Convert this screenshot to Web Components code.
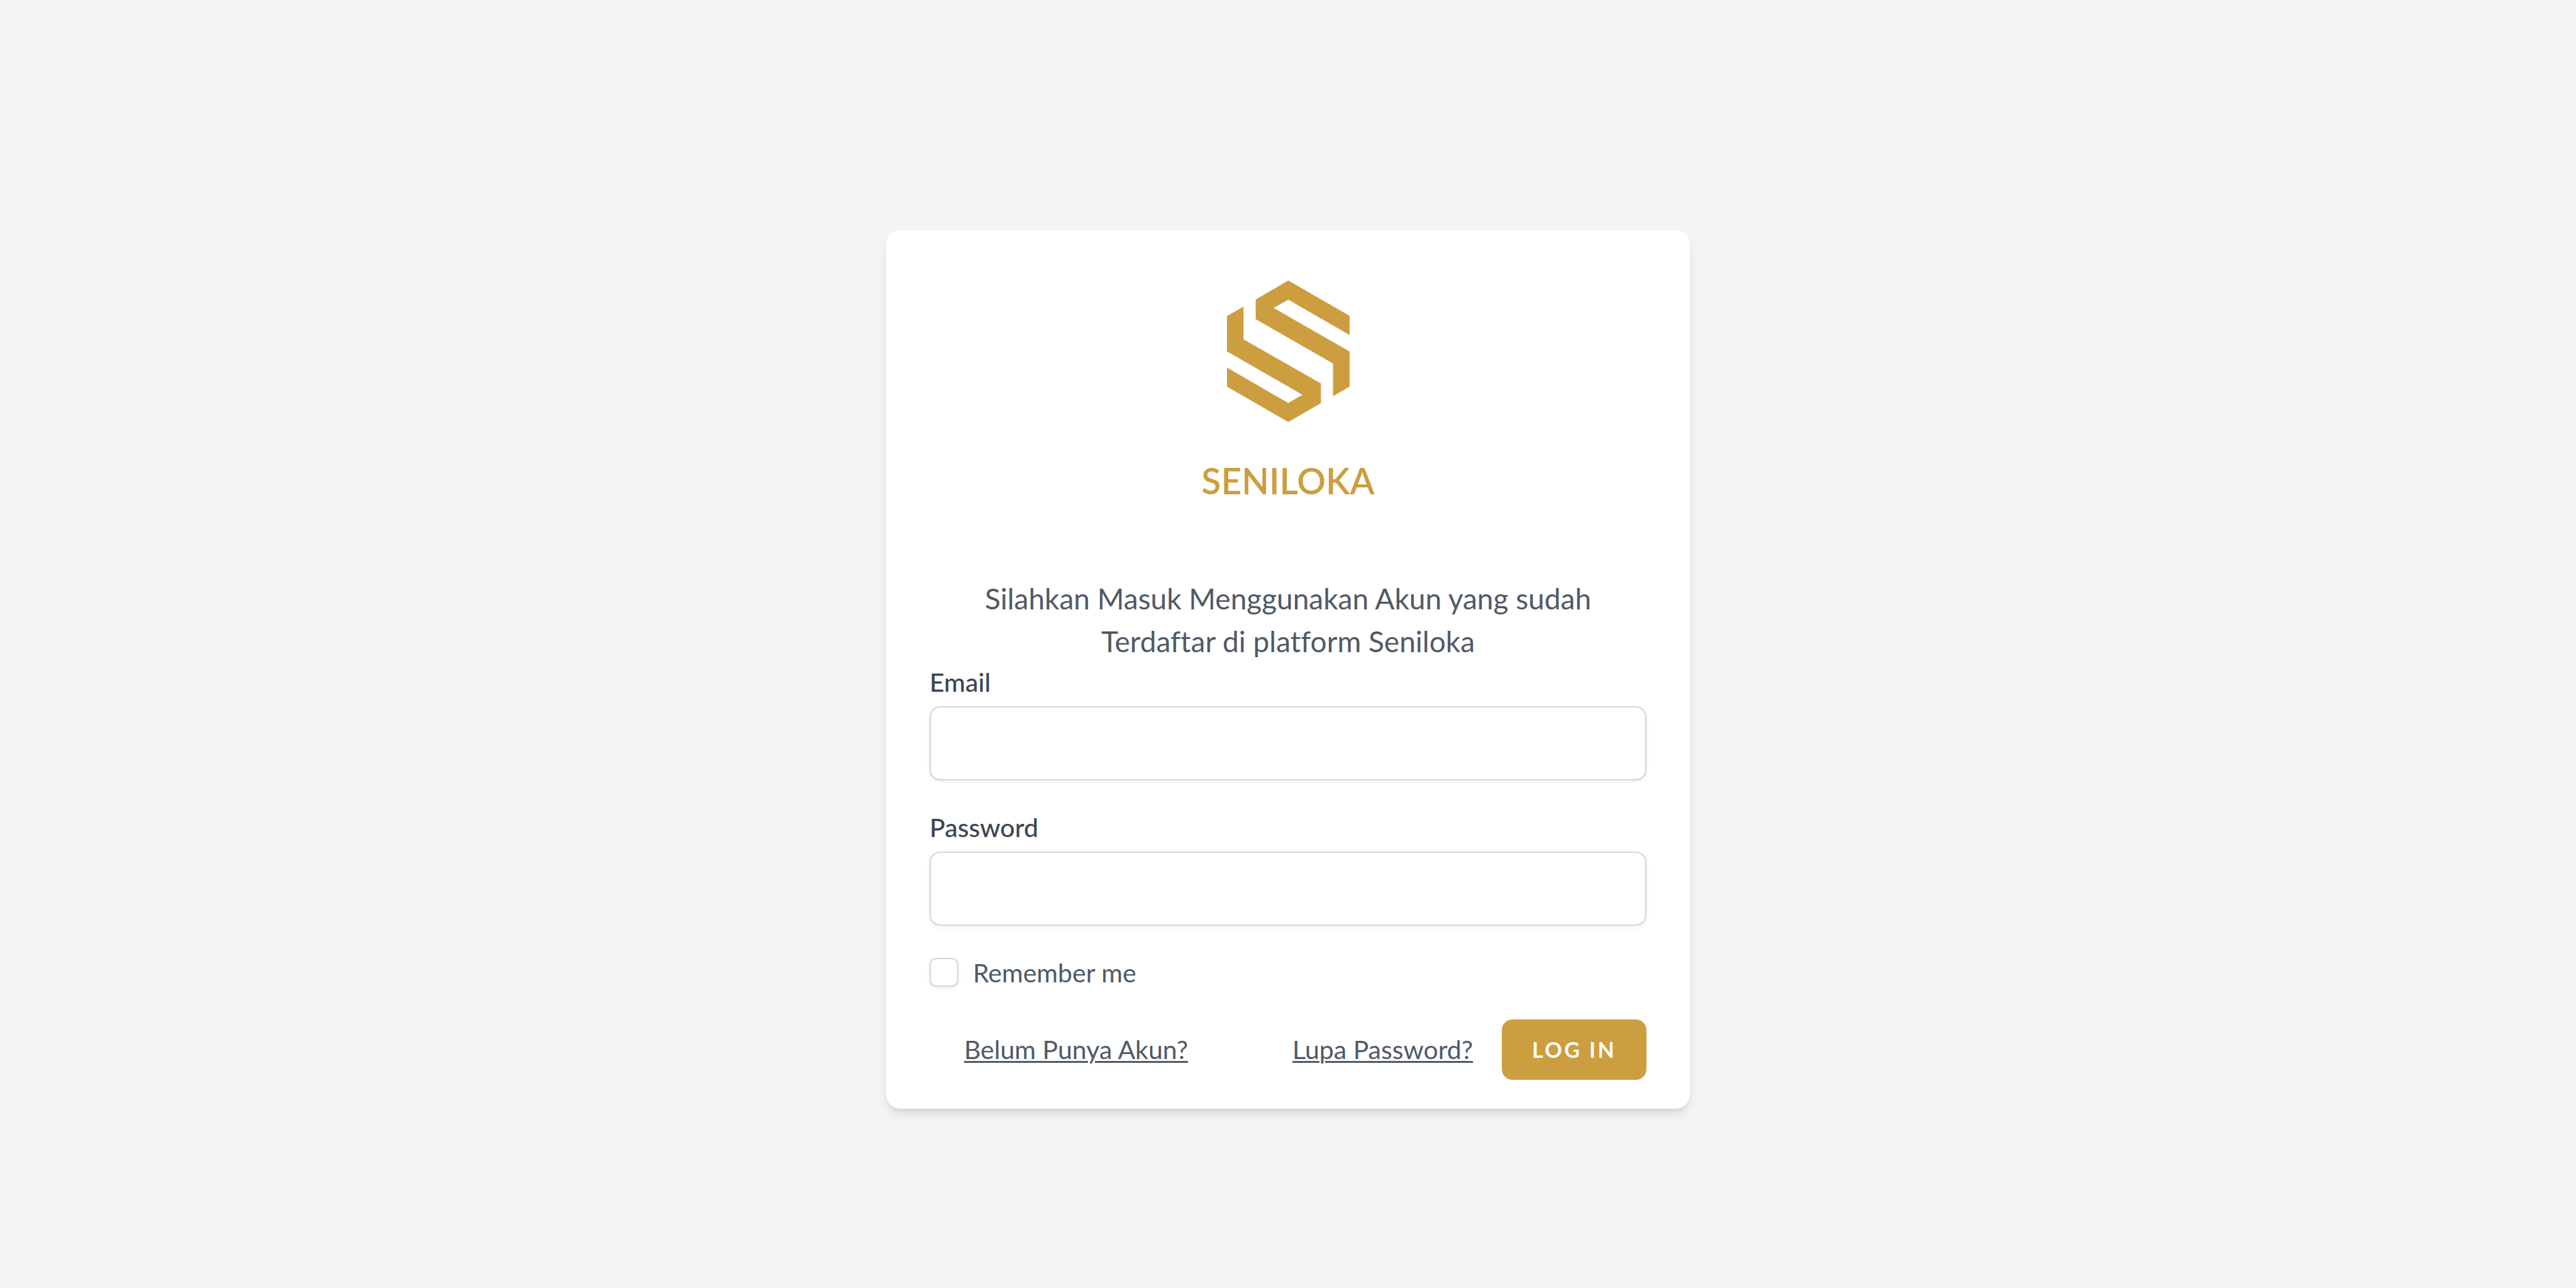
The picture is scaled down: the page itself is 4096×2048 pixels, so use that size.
<!DOCTYPE html>
<html lang="id">
<head>
<meta charset="utf-8">
<meta name="viewport" content="width=device-width, initial-scale=1">
<title>Seniloka</title>
<style>
  body {
    margin: 0;
    --gold: #cc9e40;
    --text: #4f5a66;
    --label: #3c4654;
    --line: #d1d5db;
    font-family: Lato, "Open Sans", sans-serif;
    font-variant-ligatures: none;
    color: var(--text);
    background: #f3f4f6;
  }
</style>
</head>
<body>
<auth-page>
  <auth-card>
    <brand-logo slot="brand">SENILOKA</brand-logo>
    <login-form>Silahkan Masuk Menggunakan Akun yang sudah Terdaftar di platform Seniloka</login-form>
  </auth-card>
</auth-page>

<script>
class Component extends HTMLElement {
  connectedCallback() {
    if (this.shadowRoot) return;
    this.attachShadow({ mode: 'open' }).innerHTML =
      '<style>*{box-sizing:border-box}</style>' + this.render();
  }
}

customElements.define('auth-page', class extends Component {
  render() {
    return `
      <style>
        :host { display: flex; flex-direction: column; align-items: center; justify-content: center;
          min-height: 100vh; padding-top: 80px; box-sizing: border-box; }
      </style>
      <slot></slot>`;
  }
});

customElements.define('auth-card', class extends Component {
  render() {
    return `
      <style>
        :host { display: flex; flex-direction: column; gap: 114px; box-sizing: border-box;
          width: 100%; max-width: 1278px; padding: 80px 69px 46px; background: #fff; border-radius: 23px;
          box-shadow: 0 11px 17px -3px rgb(0 0 0 / .1), 0 6px 11px -6px rgb(0 0 0 / .1); }
      </style>
      <slot name="brand"></slot>
      <slot></slot>`;
  }
});

customElements.define('brand-logo', class extends Component {
  render() {
    return `
      <style>
        :host { display: flex; flex-direction: column; align-items: center; gap: 53px; color: var(--gold); }
        svg { display: block; width: 195px; height: 225px; }
        h1 { margin: 0; font-size: 57px; line-height: 80px; font-weight: 600; }
      </style>
      <svg viewBox="280 158 988 1140" fill="currentColor" aria-hidden="true">
        <path d="M774 158 1268 443V598L774 312 656 379 1268 731V1013L1134 1090V827L511 469V311Z"/>
        <path d="M774 1298 280 1013V860L774 1145 888 1079 280 729V444L413 368V632L1037 988V1146Z"/>
      </svg>
      <h1><slot></slot></h1>`;
  }
});

customElements.define('form-field', class extends Component {
  render() {
    const type = this.getAttribute('type');
    return `
      <style>
        :host { display: flex; flex-direction: column; gap: 10px; }
        label { font-size: 41px; line-height: 57px; font-weight: 500; color: var(--label); }
        input { width: 100%; height: 118px; padding: 0 34px; font: inherit; font-size: 46px; color: inherit;
          background: #fff; border: 2px solid var(--line); border-radius: 17px; outline: 0;
          box-shadow: 0 3px 6px rgb(0 0 0 / .05); }
      </style>
      <label for="control"><slot></slot></label>
      <input id="control" type="${type}" name="${type}">`;
  }
});

customElements.define('check-field', class extends Component {
  render() {
    return `
      <style>
        :host { display: flex; }
        label { display: flex; align-items: center; gap: 23px; font-size: 41px; line-height: 57px; }
        input { appearance: none; width: 46px; height: 46px; margin: 0; background: #fff;
          border: 2px solid var(--line); border-radius: 11px; box-shadow: 0 3px 6px rgb(0 0 0 / .05); }
        input:checked { background: var(--gold); border-color: var(--gold); }
      </style>
      <label><input type="checkbox" name="remember"><span><slot></slot></span></label>`;
  }
});

customElements.define('text-link', class extends Component {
  render() {
    return `
      <style>
        :host { display: block; }
        a { font-size: 41px; line-height: 57px; color: inherit;
          text-decoration: underline 3px; text-underline-offset: 3px; }
      </style>
      <a href="${this.getAttribute('href')}"><slot></slot></a>`;
  }
});

customElements.define('primary-button', class extends Component {
  render() {
    return `
      <style>
        :host { display: block; }
        button { display: block; height: 96px; padding: 0 48px; border: 0; border-radius: 17px;
          background: var(--gold); color: #fff; font: inherit; font-size: 34px; line-height: 46px;
          font-weight: 700; letter-spacing: .1em; text-transform: uppercase; }
      </style>
      <button type="submit"><slot></slot></button>`;
  }
});

customElements.define('login-form', class extends Component {
  render() {
    return `
      <style>
        :host { display: block; }
        p { margin: 0 0 2px; padding: 0 46px; font-size: 46px; line-height: 68px; text-align: center; }
        form { display: flex; flex-direction: column; gap: 46px; }
        footer { display: flex; align-items: center; justify-content: flex-end; gap: 46px; }
        nav { display: flex; gap: 166px; }
      </style>
      <p><slot></slot></p>
      <form>
        <form-field type="email">Email</form-field>
        <form-field type="password">Password</form-field>
        <check-field>Remember me</check-field>
        <footer>
          <nav>
            <text-link href="#register">Belum Punya Akun?</text-link>
            <text-link href="#forgot">Lupa Password?</text-link>
          </nav>
          <primary-button>Log in</primary-button>
        </footer>
      </form>`;
  }
});
</script>
</body>
</html>
